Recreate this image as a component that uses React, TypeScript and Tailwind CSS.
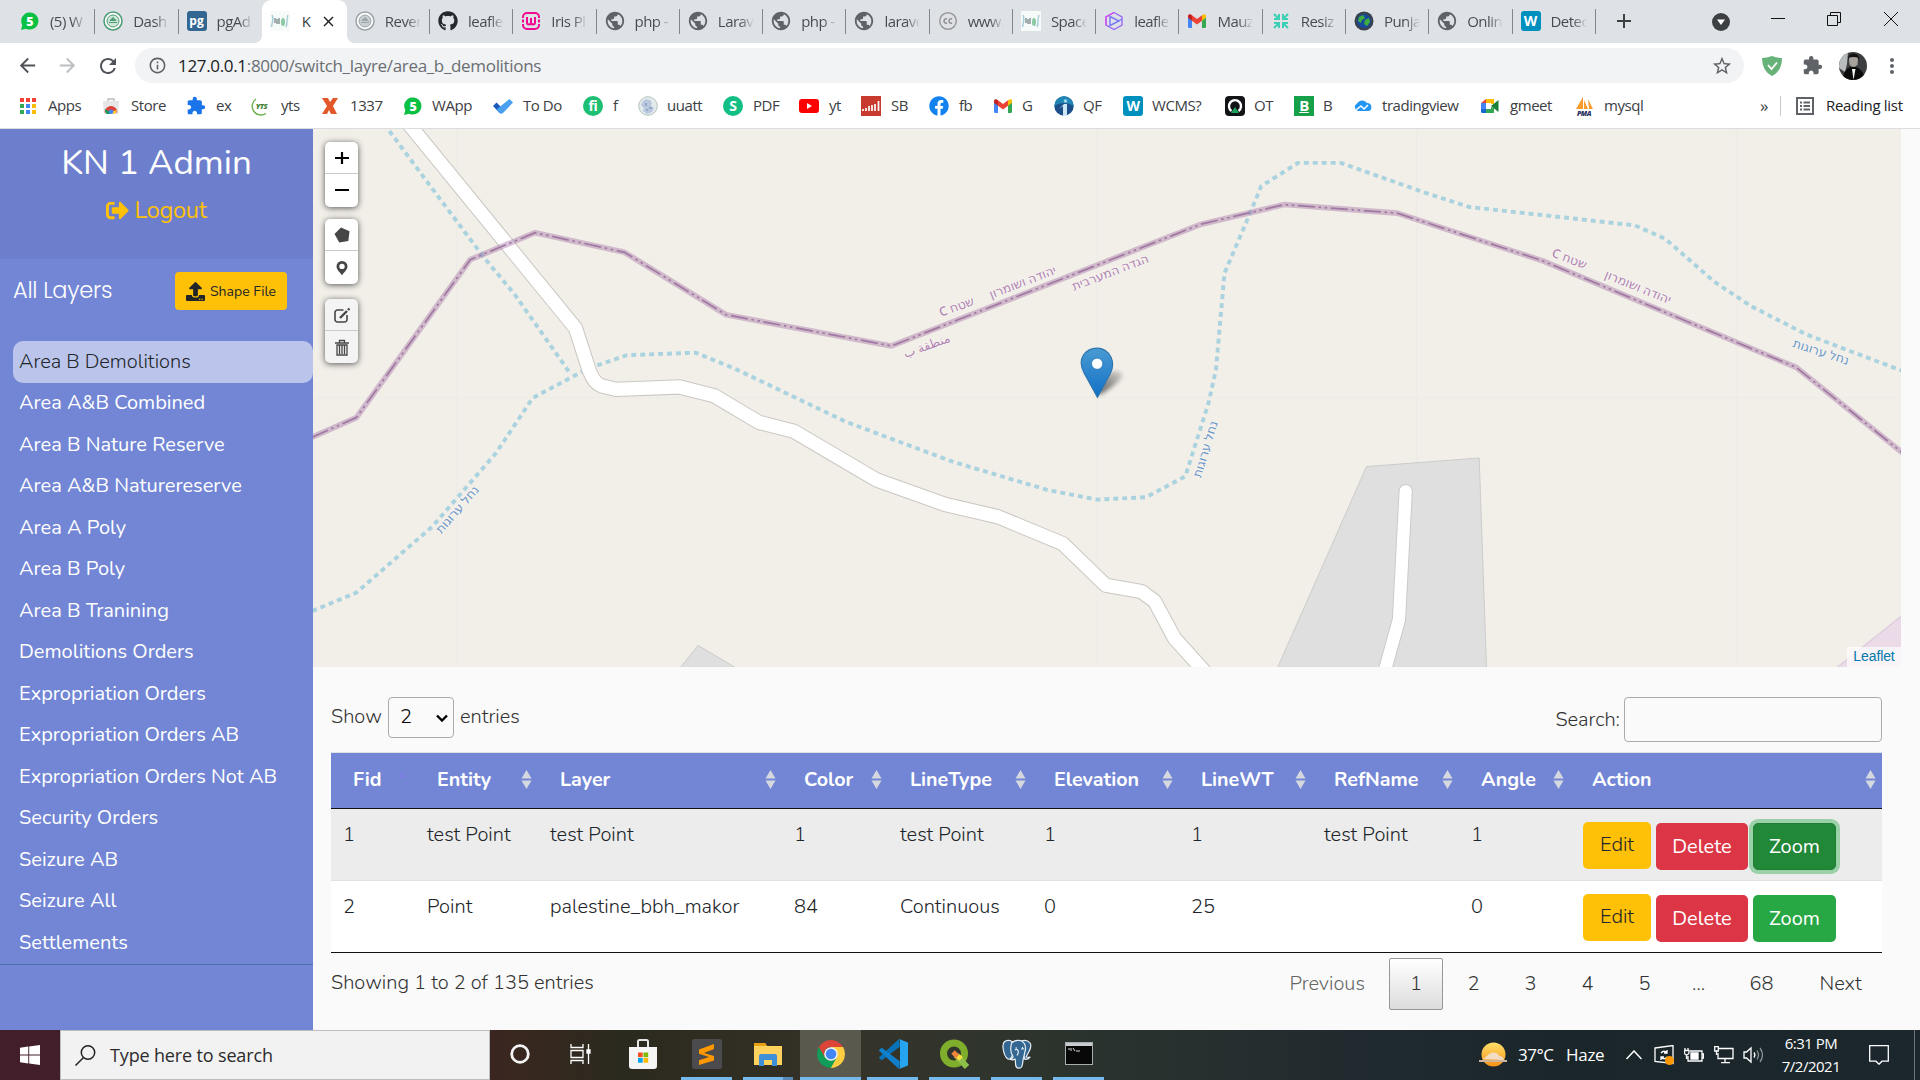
import React from "react";
import { FaSignOutAlt, FaUpload, FaGithub, FaFacebook } from "react-icons/fa";
import {
  MdArrowBack,
  MdArrowForward,
  MdRefresh,
  MdInfoOutline,
  MdStarBorder,
  MdExtension,
  MdMoreVert,
  MdPublic,
  MdClose,
  MdAdd,
} from "react-icons/md";

/* ---------- small brand marks ---------- */

const Badge = ({ cls, children }: { cls: string; children: React.ReactNode }) => (
  <span className={`flex h-5 w-5 shrink-0 items-center justify-center font-bold leading-none text-white ${cls}`}>{children}</span>
);

const WhatsNumber = () => (
  <svg viewBox="0 0 20 20" className="h-5 w-5 shrink-0">
    <path d="M1 19l1.3-4.8A8.6 8.6 0 1 1 6 17.7z" fill="#0ac144" />
    <text x="10" y="14.5" textAnchor="middle" fontSize="12.5" fontWeight="800" fill="#fff" fontFamily="Open Sans, sans-serif">5</text>
  </svg>
);

const Globe = () => <MdPublic className="h-[22px] w-[22px] shrink-0 text-[#5f6368]" />;

const Gmail = () => (
  <svg viewBox="0 0 20 20" className="h-5 w-5 shrink-0">
    <path d="M1 5.5v10.3c0 .7.5 1.2 1.2 1.2H5V8.5z" fill="#4285f4" />
    <path d="M15 8.5V17h2.8c.7 0 1.2-.5 1.2-1.2V5.5z" fill="#34a853" />
    <path d="M5 4.2v5.5l5 3.8 5-3.8V4.2L10 8z" fill="#ea4335" />
    <path d="M1 5v1.7l4 3V4.2C3.3 2.7 1 3.2 1 5z" fill="#c5221f" />
    <path d="M19 5v1.7l-4 3V4.2c1.700-1.500 4-1 4 .8z" fill="#fbbc04" />
  </svg>
);

const Seal = ({ ring, fill }: { ring: string; fill: string }) => (
  <svg viewBox="0 0 20 20" className="h-5 w-5 shrink-0">
    <circle cx="10" cy="10" r="9" fill="#fff" stroke={ring} strokeWidth="1.500" />
    <circle cx="10" cy="10" r="6" fill={fill} stroke={ring} strokeWidth="1" />
    <path d="M6 11.500h8M7 9.500l3-3 3 3z" stroke={ring} fill={ring} strokeWidth="1" />
  </svg>
);

const Emblem = () => (
  <svg viewBox="0 0 20 20" className="h-5 w-5 shrink-0">
    <circle cx="10" cy="10" r="9.300" fill="#e4eaec" stroke="#b3c3bd" strokeWidth="1" />
    <path d="M5 5l3-2 4 1 2 3-1 3 3 2-2 4-5 2-4-3 1-3-3-3z" fill="#b9c8de" />
    <path d="M7 7h2v3H7zM11 11h3v2h-3zM8 13h2v2H8z" fill="#93a9cb" />
  </svg>
);

const Wave = () => (
  <svg viewBox="0 0 20 20" className="h-5 w-5 shrink-0">
    <rect width="20" height="20" fill="#f6faf9" />
    <path d="M2 4c2 4 0 8-.5 12M18 4c-2 4 0 8-2 12" stroke="#a9cdd8" strokeWidth="1.500" fill="none" />
    <path d="M5 7v5M7 8v5M9 7v6" stroke="#6d7a7c" strokeWidth="1.200" />
    <ellipse cx="13" cy="11" rx="2" ry="4" fill="#8cc9a4" />
  </svg>
);

const Wamp = () => (
  <svg viewBox="0 0 20 20" className="h-5 w-5 shrink-0">
    <path d="M2 7V6a4 4 0 0 1 4-4h8a4 4 0 0 1 4 4v1M2 13v1a4 4 0 0 0 4 4h8a4 4 0 0 0 4-4v-1M2 8.500v3M18 8.500v3" stroke="#f10a90" strokeWidth="2" fill="none" />
    <path d="M6 6v5.500a2 2 0 0 0 4 0V7v4.500a2 2 0 0 0 4 0V6" stroke="#f10a90" strokeWidth="2" fill="none" />
  </svg>
);

const Creative = () => (
  <svg viewBox="0 0 20 20" className="h-5 w-5 shrink-0">
    <circle cx="10" cy="10" r="8.300" fill="none" stroke="#9a9a9a" strokeWidth="1.500" />
    <path d="M9 8a2 2.300 0 1 0 0 4M14 8a2 2.300 0 1 0 0 4" stroke="#8d8d8d" strokeWidth="1.500" fill="none" />
  </svg>
);

const Hex = () => (
  <svg viewBox="0 0 20 20" className="h-5 w-5 shrink-0" fill="none" strokeWidth="1.400">
    <path d="M10 1.500l8 4.500v8l-8 4.500-8-4.500V6z" stroke="#9a6bf6" />
    <path d="M10 1.500L2 6v8" stroke="#d84df0" />
    <path d="M6 5.500v9l9-4.500z M6 14.500L18 8" stroke="#7a78f8" />
  </svg>
);

const Shrink = () => (
  <svg viewBox="0 0 20 20" className="h-5 w-5 shrink-0" stroke="#3ccfb4" strokeWidth="2" fill="none">
    <path d="M8 3v5H3M3 3l5 5M12 3v5h5M17 3l-5 5M8 17v-5H3M3 17l5-5M12 17v-5h5M17 17l-5-5" />
  </svg>
);

const Earth = () => (
  <svg viewBox="0 0 20 20" className="h-5 w-5 shrink-0">
    <circle cx="10" cy="10" r="9.500" fill="#39424d" />
    <circle cx="10" cy="10" r="7" fill="#174a9c" />
    <path d="M5 6l4-2 2 3-3 2-1 3-3-2zM11 9l4-2 1 4-3 4-3-2z" fill="#3fae3c" />
  </svg>
);

const AppsGrid = () => (
  <span className="grid w-4 shrink-0 grid-cols-3 gap-[2px]">
    {["bg-[#f44336]", "bg-[#f44336]", "bg-[#f44336]", "bg-[#34a853]", "bg-[#4285f4]", "bg-[#fbbc04]", "bg-[#34a853]", "bg-[#4285f4]", "bg-[#fbbc04]"].map((c, i) => (
      <span key={i} className={`h-1 w-1 ${c}`} />
    ))}
  </span>
);

const ChromeLogo = ({ cls }: { cls: string }) => (
  <svg viewBox="0 0 28 28" className={cls}>
    <path d="M14 14l-12.100-7A14 14 0 0 0 14 28l6-10.500z" fill="#0f9d58" />
    <path d="M14 14L14 28A14 14 0 0 0 26.100 7H14z" fill="#ffcd40" />
    <path d="M14 28L20 17.500 14 14 8 17.500z" fill="#0f9d58" />
    <path d="M14 28l6.060-10.500L24 14l-5 12z" fill="#ffcd40" />
    <path d="M1.900 7A14 14 0 0 1 26.100 7H14a7 7 0 0 0-6.500 4.500L7.900 17.500z" fill="#db4437" />
    <circle cx="14" cy="14" r="6.800" fill="#f1f1f1" />
    <circle cx="14" cy="14" r="5.300" fill="#4285f4" />
  </svg>
);

const Store = () => (
  <svg viewBox="0 0 20 20" className="h-5 w-5 shrink-0">
    <path d="M7 5V3h6v2" stroke="#bbb" strokeWidth="1.300" fill="none" />
    <path d="M2 5h16l-.8 13H2.800z" fill="#e6e6e6" />
    <path d="M3.500 16.500a6.500 6.500 0 0 1 13 0h-4a2.500 2.500 0 0 0-5 0z" fill="#db4437" />
    <path d="M3.500 13l2 5h4l-2-3z" fill="#0f9d58" />
    <path d="M16.500 14l-2.500 4h-4l2.500-3z" fill="#ffcd40" />
    <circle cx="10" cy="15.800" r="2.300" fill="#4285f4" />
  </svg>
);

const Yts = () => (
  <svg viewBox="0 0 20 20" className="h-5 w-5 shrink-0">
    <path d="M5 3a8.500 8.500 0 0 0 10 14.500" stroke="#6ab04a" strokeWidth="1.400" fill="none" />
    <text x="10.500" y="12.500" textAnchor="middle" fontSize="7.500" fontWeight="800" fontStyle="italic" fill="#3f7f34" fontFamily="Open Sans, sans-serif">YTS</text>
  </svg>
);

const Cross1337 = () => (
  <svg viewBox="0 0 20 20" className="h-5 w-5 shrink-0">
    <path d="M2 2h6l2 4 3-4h5l-5 8 4 8h-6l-2-4-2 4H2l5-8z" fill="#e2582a" />
  </svg>
);

const Todo = () => (
  <svg viewBox="0 0 22 20" className="h-5 w-[22px] shrink-0">
    <path d="M1 10l3.500-3.500L11 13l-3.500 4z" fill="#185abd" />
    <path d="M7.500 17l-3-3.500L17.500 3 21 6.500 11 17q-1.700 1.400-3.500 0z" fill="#4aa0ee" />
  </svg>
);

const Youtube = () => (
  <svg viewBox="0 0 20 20" className="h-5 w-5 shrink-0">
    <rect y="3" width="20" height="14" rx="3" fill="#f00" />
    <path d="M8 7v6l5-3z" fill="#fff" />
  </svg>
);

const Bars = () => (
  <svg viewBox="0 0 20 20" className="h-5 w-5 shrink-0">
    <rect width="20" height="20" fill="#c93a2e" />
    <path d="M2 15v-2M5 15v-3M8 15v-5M11 15v-6M14 15V8M17.500 15V5" stroke="#fff" strokeWidth="1.700" />
  </svg>
);

const Quick = () => (
  <svg viewBox="0 0 20 20" className="h-5 w-5 shrink-0">
    <circle cx="10" cy="10" r="9.700" fill="#1c4f8a" />
    <path d="M.3 10a9.700 9.700 0 0 1 19.400 0q-10-6-19.400 0z" fill="#1f86b5" />
    <path d="M9 20V10l-4 3 5-5h3v12z" fill="#cfe6f7" />
    <circle cx="11.500" cy="5" r="1.800" fill="#9bd7ea" />
  </svg>
);

const Dial = () => (
  <svg viewBox="0 0 20 20" className="h-5 w-5 shrink-0">
    <rect width="20" height="20" rx="4" fill="#131417" />
    <path d="M6.500 15a6 6 0 1 1 7 0" stroke="#fff" strokeWidth="2.400" fill="none" />
    <path d="M10 11l4 6H6z" fill="#18a45b" />
  </svg>
);

const Cloud = () => (
  <svg viewBox="0 0 20 20" className="h-5 w-5 shrink-0">
    <path d="M5 15a4 4 0 0 1-1-7.500A6 6 0 0 1 14 7a4.200 4.200 0 0 1 2 8z" fill="#2196f3" />
    <path d="M3 14l5-4 3 3 4-4" stroke="#fff" strokeWidth="1.500" fill="none" />
  </svg>
);

const Meet = () => (
  <svg viewBox="0 0 20 20" className="h-5 w-5 shrink-0">
    <path d="M1 7l5-4v4z" fill="#ea4335" />
    <path d="M6 3h8v5h-3V7H6z" fill="#fbbc04" />
    <path d="M1 7h5v6H1z" fill="#4285f4" />
    <path d="M1 13h5v4H2.500Q1 17 1 15.500z" fill="#1967d2" />
    <path d="M6 13h5v-2l3 1v5H6z" fill="#34a853" />
    <path d="M11 10l7.500-6v12z" fill="#188038" />
  </svg>
);

const Pma = () => (
  <svg viewBox="0 0 20 20" className="h-5 w-5 shrink-0">
    <path d="M2 13L9 1v12zM10 13V4l4 9zM14 3l5 10h-4z" fill="#f89c2e" />
    <text x="10" y="19.500" textAnchor="middle" fontSize="7" fontWeight="800" fontStyle="italic" fill="#2d3263" fontFamily="Open Sans, sans-serif">PMA</text>
  </svg>
);

const Elephant = () => (
  <svg viewBox="0 0 30 30" className="h-[30px] w-[30px]" fill="#336791" stroke="#e8eef3" strokeWidth="1.200" strokeLinejoin="round">
    <path d="M8 1.500C3 .5.500 3.500 1 8.500 1.500 13 3.500 18.500 6 20q2 .8 3.500-2L11 15V3z" />
    <path d="M19 2q6-2 9 2 2 3.500-1 8.500-1.500 3-3 5.500 2 .5 4 .2-1.500 2.300-5 2.300l-2-5z" />
    <path d="M9.500 4q3-3.500 9-2.500Q24 4 23.500 10L22 17q-1 3.500-1.500 8-.5 4.200-3.500 4.200-3.500 0-3.500-4.700l-.3-4.500q-2.700 1.500-5 .3 3-1 2.800-3Q8.500 14 8.700 9z" />
    <path d="M13 11q2-1.500 3 .5t-1 5M22 10q-2-1-2.500.5" fill="none" />
    <path d="M13.500 9h1.500M20 8.500h1" stroke="#fff" />
  </svg>
);

/* ---------- browser chrome ---------- */

const tabs: { label: string; icon: React.ReactNode; active?: boolean }[] = [
  { label: "(5) W", icon: <WhatsNumber /> },
  { label: "Dash", icon: <Seal ring="#4c9c74" fill="#cfe6d8" /> },
  { label: "pgAd", icon: <Badge cls="rounded-[3px] bg-[#336791] text-[12px]">pg</Badge> },
  { label: "K", icon: <Wave />, active: true },
  { label: "Rever", icon: <Seal ring="#9aa5a8" fill="#c9d0d3" /> },
  { label: "leafle", icon: <FaGithub className="h-5 w-5 shrink-0 text-[#24292e]" /> },
  { label: "Iris Pl", icon: <Wamp /> },
  { label: "php -", icon: <Globe /> },
  { label: "Larav", icon: <Globe /> },
  { label: "php -", icon: <Globe /> },
  { label: "larave", icon: <Globe /> },
  { label: "www.", icon: <Creative /> },
  { label: "Space", icon: <Wave /> },
  { label: "leafle", icon: <Hex /> },
  { label: "Mauz", icon: <Gmail /> },
  { label: "Resiz", icon: <Shrink /> },
  { label: "Punja", icon: <Earth /> },
  { label: "Onlin", icon: <Globe /> },
  { label: "Detec", icon: <Badge cls="rounded-[3px] bg-[#0090bd] text-[14px]">W</Badge> },
];

function TabStrip() {
  return (
    <div className="flex h-[43px] bg-[#dee1e6] pl-3">
      {tabs.map((t, i) =>
        t.active ? (
          <div key={i} className="relative flex w-[85px] shrink-0 items-center rounded-t-[9px] bg-white pb-[1px] pl-2 text-[15px] text-[#3c4043]">
            <span className="absolute -left-2 bottom-0 h-2 w-2 bg-[radial-gradient(circle_at_0_0,transparent_8px,white_8px)]" />
            <span className="absolute -right-2 bottom-0 h-2 w-2 bg-[radial-gradient(circle_at_100%_0,transparent_8px,white_8px)]" />
            {t.icon}
            <span className="ml-[12px] flex-1">{t.label}</span>
            <MdClose className="mr-[10px] h-[17px] w-[17px] text-[#202124]" />
          </div>
        ) : (
          <div key={i} className="flex w-[83.280px] shrink-0 items-center pb-[1px] pl-2">
            <span className="flex w-5 shrink-0 justify-center">{t.icon}</span>
            <span className="ml-[10px] w-[36px] bg-linear-to-r from-[#45494d] from-60% to-[#dee1e6] bg-clip-text text-[15px] tracking-[-0.55px] whitespace-nowrap text-transparent">
              {t.label}
            </span>
            <span className={`ml-auto h-[25px] w-px ${tabs[i + 1]?.active ? "bg-transparent" : "bg-[#84878b]"}`} />
          </div>
        ),
      )}
      <MdAdd className="mt-[9px] ml-[16px] h-6 w-6 text-[#3c4043]" />
      <div className="ml-auto flex items-start">
        <svg viewBox="0 0 18 18" className="mt-[13px] mr-[41px] h-[18px] w-[18px]">
          <circle cx="9" cy="9" r="9" fill="#3c4043" />
          <path d="M5 6.500h8L9 12z" fill="#fff" />
        </svg>
        <svg viewBox="0 0 14 14" className="mt-3 mr-[42px] h-[14px] w-[14px]" stroke="#111" fill="none"><path d="M0 6.500h14" /></svg>
        <svg viewBox="0 0 14 14" className="mt-3 mr-[43px] h-[14px] w-[14px]" stroke="#111" fill="none"><path d="M.5 3.500h10v10H.5zM3.500 3.500V.5h10v10h-3" /></svg>
        <svg viewBox="0 0 14 14" className="mt-3 mr-[22px] h-[14px] w-[14px]" stroke="#111" fill="none"><path d="M0 0l14 14M14 0L0 14" /></svg>
      </div>
    </div>
  );
}

function AddressBar() {
  return (
    <div className="flex h-[45px] items-center bg-white">
      <MdArrowBack className="ml-[16px] h-[23px] w-[23px] text-[#505459]" />
      <MdArrowForward className="ml-[17px] h-[23px] w-[23px] text-[#bcbec1]" />
      <MdRefresh className="ml-[17px] h-6 w-6 text-[#505459]" />
      <div className="ml-[15px] flex h-[35px] w-[1609px] items-center rounded-full bg-[#f1f3f4] pl-[13px] text-[17px] tracking-[-0.33px] text-[#6a6e73]">
        <MdInfoOutline className="mr-[11px] h-[19px] w-[19px] text-[#5f6368]" />
        <span><span className="text-[#202124]">127.0.0.1</span>:8000/switch_layre/area_b_demolitions</span>
        <MdStarBorder className="mr-[11px] ml-auto h-[22px] w-[22px] text-[#5f6368]" />
      </div>
      <svg viewBox="0 0 20 20" className="ml-[18px] h-5 w-5">
        <path d="M10 0q5 2 10 2 0 13-10 18Q0 15 0 2q5 0 10-2z" fill="#67b279" />
        <path d="M6 9l3.500 4L15 6.500" stroke="#fff" strokeWidth="1.800" fill="none" />
      </svg>
      <MdExtension className="ml-[20px] h-[21px] w-[21px] text-[#5f6368]" />
      <svg viewBox="0 0 28 28" className="ml-[16px] h-7 w-7">
        <clipPath id="avatar"><circle cx="14" cy="14" r="14" /></clipPath>
        <g clipPath="url(#avatar)">
          <rect width="28" height="28" fill="#3c3e40" />
          <path d="M0 0h9l-1 12-2 8-6-4z" fill="#b9bcbd" />
          <path d="M4 28q0-10 7-13h6q8 3 9 13z" fill="#0b0b0c" />
          <path d="M10 7q0-4 4.500-4T19 7l-.5 5.500q-4 5-8 0z" fill="#a7a19c" />
          <path d="M9 8q0-7 6-6.500 6 .5 5 7l-1.500-3q-4-1-8 0z" fill="#141414" />
          <path d="M13 17l1.500 11 2-11z" fill="#f4f4f4" />
        </g>
      </svg>
      <MdMoreVert className="ml-[13px] h-6 w-6 text-[#5f6368]" />
    </div>
  );
}

const bookmarks: { label: string; icon: React.ReactNode; w: string; gap: string }[] = [
  { label: "Apps", icon: <AppsGrid />, w: "w-[81px]", gap: "gap-3" },
  { label: "Store", icon: <Store />, w: "w-[85px]", gap: "gap-[10px]" },
  { label: "ex", icon: <MdExtension className="h-5 w-5 shrink-0 text-[#1a73e8]" />, w: "w-[65px]", gap: "gap-[10px]" },
  { label: "yts", icon: <Yts />, w: "w-[69px]", gap: "gap-[10px]" },
  { label: "1337", icon: <Cross1337 />, w: "w-[83px]", gap: "gap-[10px]" },
  { label: "WApp", icon: <WhatsNumber />, w: "w-[89px]", gap: "gap-[9px]" },
  { label: "To Do", icon: <Todo />, w: "w-[91px]", gap: "gap-[9px]" },
  { label: "f", icon: <Badge cls="rounded-full bg-[#1dbf73] text-[14px]">fi</Badge>, w: "w-[55px]", gap: "gap-[10px]" },
  { label: "uuatt", icon: <Emblem />, w: "w-[85px]", gap: "gap-[9px]" },
  { label: "PDF", icon: <Badge cls="rounded-full bg-[#11bf85] text-[14px]">S</Badge>, w: "w-[76px]", gap: "gap-[10px]" },
  { label: "yt", icon: <Youtube />, w: "w-[62px]", gap: "gap-[10px]" },
  { label: "SB", icon: <Bars />, w: "w-[68px]", gap: "gap-[10px]" },
  { label: "fb", icon: <FaFacebook className="h-5 w-5 shrink-0 text-[#1382ee]" />, w: "w-[64px]", gap: "gap-[10px]" },
  { label: "G", icon: <Gmail />, w: "w-[61px]", gap: "gap-[9px]" },
  { label: "QF", icon: <Quick />, w: "w-[69px]", gap: "gap-[9px]" },
  { label: "WCMS?", icon: <Badge cls="rounded-[3px] bg-[#0090bd] text-[14px]">W</Badge>, w: "w-[102px]", gap: "gap-[9px]" },
  { label: "OT", icon: <Dial />, w: "w-[69px]", gap: "gap-[9px]" },
  { label: "B", icon: <Badge cls="bg-[#15a049] text-[15px] underline">B</Badge>, w: "w-[59px]", gap: "gap-[9px]" },
  { label: "tradingview", icon: <Cloud />, w: "w-[127px]", gap: "gap-[9px]" },
  { label: "gmeet", icon: <Meet />, w: "w-[94px]", gap: "gap-[10px]" },
  { label: "mysql", icon: <Pma />, w: "w-[90px]", gap: "gap-[10px]" },
];

function Bookmarks() {
  return (
    <div className="flex h-[41px] items-center border-b border-[#dadce0] bg-white pb-[5px] pl-[20px] text-[15px] tracking-[-0.45px] text-[#3c4043]">
      {bookmarks.map((b) => (
        <div key={b.label} className={`flex shrink-0 items-center whitespace-nowrap ${b.w} ${b.gap}`}>
          {b.icon}
          <span>{b.label}</span>
        </div>
      ))}
      <span className="ml-auto text-[17px]">»</span>
      <span className="ml-[12px] h-5 w-px bg-[#c4c7cb]" />
      <svg viewBox="0 0 18 18" className="mr-[12px] ml-[15px] h-[18px] w-[18px] shrink-0" fill="none" stroke="#5f6368" strokeWidth="2">
        <path d="M1 1h16v16H1zM4 5.500h2M7.500 5.500H14M4 9h2M7.500 9H14M4 12.500h2M7.500 12.500H14" />
      </svg>
      <span className="mr-[17px] w-[77px] tracking-[-0.3px] whitespace-nowrap text-[#202124]">Reading list</span>
    </div>
  );
}

/* ---------- sidebar ---------- */

const layers = [
  "Area B Demolitions",
  "Area A&B Combined",
  "Area B Nature Reserve",
  "Area A&B Naturereserve",
  "Area A Poly",
  "Area B Poly",
  "Area B Tranining",
  "Demolitions Orders",
  "Expropriation Orders",
  "Expropriation Orders AB",
  "Expropriation Orders Not AB",
  "Security Orders",
  "Seizure AB",
  "Seizure All",
  "Settlements",
];

function Sidebar() {
  return (
    <aside className="flex w-[313px] shrink-0 flex-col bg-[#7286d5] text-white">
      <div className="flex h-[130px] flex-col items-center bg-[#6d7fcc] pt-[12px]">
        <h3 className="text-[35px] leading-[44px]">KN 1 Admin</h3>
        <a className="mt-[8px] flex items-center gap-[5px] text-[23.500px] leading-[34px] tracking-[-0.3px] text-[#ffc107]">
          <FaSignOutAlt className="h-[23px] w-[23px]" />
          Logout
        </a>
      </div>
      <div className="flex h-[64px] items-center justify-between pr-[26px] pl-[13px]">
        <span className="font-['Poppins','Inter',sans-serif] text-[22.500px] font-light tracking-[-0.25px]">All Layers</span>
        <button className="flex h-[38px] w-[112px] items-center rounded-[4px] bg-[#ffc107] pl-[11px] text-[14px] text-[#212529]">
          <FaUpload className="mr-[5px] h-[19px] w-[19px]" />
          Shape File
        </button>
      </div>
      <ul className="mt-[18px] border-b border-[#4d73a0] pl-[13px]">
        {layers.map((l, i) => (
          <li
            key={l}
            className={`flex h-[41.500px] items-center rounded-[10px] pl-[6px] text-[20px] whitespace-nowrap ${i === 0 ? "bg-[#bbc5eb] font-light text-[#212529]" : ""}`}
          >
            {l}
          </li>
        ))}
      </ul>
    </aside>
  );
}

/* ---------- map ---------- */

const stream =
  "M255 499L291 484 353 430 405 370 435 325 480 301 512 290 568 288 600 301 690 344 719 355 778 377 855 400 896 408 936 406 968 389 987 329 993 302 1000 223 1018 181 1030 152 1060 133 1095 133 1163 157 1200 169 1335 184 1360 195 1400 230 1430 250 1475 273 1554 303";
const border = "M255 357L291 341 384 212 437 190 510 206 593 257 728 282.500 981 183 1049 167 1141 174 1260 213 1467 300 1554 370";
const road = "M332 99L470 268 481 302Q485 313 491 315L503 318 555 316 583 323 620 345 648 352 716 392 772 412 815 422 868 444 903 478 932 483 943 491 959 521 986 551";

const labels: { t: string; x: number; y: number; r: number; blue?: boolean }[] = [
  { t: "שטח C", x: 781.5, y: 251, r: -20 },
  { t: "יהודה ושומרון", x: 835.5, y: 231, r: -21 },
  { t: "הגדה המערבית", x: 907, y: 223, r: -21 },
  { t: "منطقة ب", x: 757, y: 283, r: -20 },
  { t: "שטח C", x: 1281.5, y: 212, r: 21 },
  { t: "יהודה ושומרון", x: 1337.5, y: 235, r: 22 },
  { t: "נחל ערוגות", x: 1487, y: 288, r: 18, blue: true },
  { t: "נחל ערוגות", x: 985, y: 367, r: -73, blue: true },
  { t: "נחל ערוגות", x: 374, y: 416.5, r: -49, blue: true },
];

function ToolGroup({ children, cls }: { children: React.ReactNode; cls: string }) {
  return <div className={`flex w-[33px] flex-col divide-y divide-[#ccc] overflow-hidden rounded-[5px] shadow-[0_1px_6px_rgba(0,0,0,0.65)] ${cls}`}>{children}</div>;
}

function MapView() {
  return (
    <div className="relative h-[538px] w-[1588px] overflow-hidden bg-[#f2efe9]">
      <svg viewBox="255.600 105.300 1296.900 439.400" preserveAspectRatio="none" className="h-full w-full" fill="none">
        <defs>
          <linearGradient id="pin" x1="0" y1="0" x2="0" y2="1">
            <stop offset="0" stopColor="#4a9bd2" />
            <stop offset="1" stopColor="#126fc6" />
          </linearGradient>
          <linearGradient id="shade" x1="0" y1="1" x2="1" y2="0">
            <stop offset="0" stopColor="#000" stopOpacity=".65" />
            <stop offset="1" stopColor="#000" stopOpacity=".1" />
          </linearGradient>
          <filter id="soft" x="-50%" y="-50%" width="200%" height="200%"><feGaussianBlur stdDeviation="1.600" /></filter>
        </defs>
        <path d="M373 105V545M895.700 105V545M1157 105V545M1418 105V545M255 324.800H1553" stroke="#edebe6" strokeWidth=".8" />
        <path d="M1116 381L1208 374 1214 546H1043zM555 546L570 527 602 546z" fill="#dfdfdf" stroke="#cbcbcb" strokeWidth=".8" />
        <path d="M1499 546L1508 539 1554 502V546z" fill="#ebdbe8" stroke="#dccadb" />
        <path d={stream} stroke="#aad3df" strokeWidth="3.200" strokeDasharray="4 3.300" />
        <path d="M318 107L350 150 395 210 420 240 465 304" stroke="#aad3df" strokeWidth="3.200" strokeDasharray="4 3.300" />
        <path d={road} stroke="#cbc8c3" strokeWidth="12.500" strokeLinejoin="round" />
        <path d={road} stroke="#fff" strokeWidth="10.800" strokeLinejoin="round" />
        <path d="M1148 401L1142.500 506 1130 551" stroke="#c9c9c9" strokeWidth="11.500" strokeLinecap="round" />
        <path d="M1148 401L1142.500 506 1130 551" stroke="#fff" strokeWidth="10" strokeLinecap="round" />
        <path d={border} stroke="#9d6a9d" strokeOpacity=".4" strokeWidth="4.600" strokeLinejoin="round" />
        <path d={border} stroke="#a078a2" strokeWidth="1.400" strokeDasharray="14 3 2 3 2 3" />
        {labels.map((l, i) => (
          <text
            key={i}
            transform={`translate(${l.x} ${l.y}) rotate(${l.r})`}
            textAnchor="middle"
            dominantBaseline="middle"
            fontSize="10.200"
            fontWeight="500"
            direction="rtl"
            fontFamily="Noto Sans, DejaVu Sans, sans-serif"
            fill={l.blue ? "#6d99c9" : "#b184b3"}
            stroke="#f6f3ef"
            strokeWidth="1.500"
            paintOrder="stroke"
          >
            {l.t}
          </text>
        ))}
        <path d="M897 323Q899 311 907 304 914 301 917 306 915 313 897 323z" fill="url(#shade)" filter="url(#soft)" />
        <path d="M896.300 324.500L885.300 304.500Q880.800 296 884.800 290 888.800 284.300 895.800 284.300 903.300 284.300 907.300 291.500 910.300 298 906.800 305z" fill="url(#pin)" stroke="#2c74ae" strokeWidth=".9" />
        <circle cx="896" cy="297" r="4.600" fill="#fff" stroke="#2c7bbd" strokeWidth=".7" />
      </svg>

      <div className="absolute top-[13px] left-[12px] flex flex-col">
        <ToolGroup cls="bg-white">
          <span className="flex h-[32px] items-center justify-center"><svg viewBox="0 0 14 14" className="h-[14px] w-[14px]" stroke="#000" strokeWidth="2.200"><path d="M0 7h14M7 1v12" /></svg></span>
          <span className="flex h-[33px] items-center justify-center pb-[2px]"><svg viewBox="0 0 14 14" className="h-[14px] w-[14px]" stroke="#000" strokeWidth="2.200"><path d="M0 7h14" /></svg></span>
        </ToolGroup>
        <ToolGroup cls="mt-[12px] bg-white">
          <span className="flex h-[32px] items-center justify-center"><svg viewBox="0 0 16 16" className="h-4 w-4"><path d="M7 .5l8.500 3.800-1.200 9.700-9 1.500L.500 7z" fill="#464646" /></svg></span>
          <span className="flex h-[33px] items-center justify-center"><svg viewBox="0 0 16 16" className="h-4 w-4"><path fillRule="evenodd" d="M8 1a5.500 5.500 0 0 1 5.500 5.500C13.500 10 9 13 8 15.500 7 13 2.500 10 2.500 6.500A5.500 5.500 0 0 1 8 1zm0 2.700a2.700 2.700 0 1 0 0 5.400 2.700 2.700 0 0 0 0-5.400z" fill="#464646" /></svg></span>
        </ToolGroup>
        <ToolGroup cls="mt-[15px] bg-[#f4f4f4]">
          <span className="flex h-[32px] items-center justify-center">
            <svg viewBox="0 0 16 16" className="h-4 w-4" fill="none" stroke="#464646" strokeWidth="1.600">
              <path d="M9.500 3H3.500A2.500 2.500 0 0 0 1 5.500v7A2.500 2.500 0 0 0 3.500 15h7a2.500 2.500 0 0 0 2.500-2.500V8" />
              <path d="M6 11L13 4" strokeWidth="2.400" /><path d="M14 3l1.500-1.500" strokeWidth="2.400" />
            </svg>
          </span>
          <span className="flex h-[32px] items-center justify-center">
            <svg viewBox="0 0 16 17" className="h-[17px] w-4" fill="none" stroke="#464646" strokeWidth="1.300">
              <path d="M1 4h14M5.500 4V1.500h5V4M3 6v10h10V6zM5.500 6.500V15M8 6.500V15M10.500 6.500V15" />
            </svg>
          </span>
        </ToolGroup>
      </div>

      <div className="absolute right-0 bottom-0 flex h-[20px] w-[54px] items-center justify-center bg-white/70 pb-[2px] font-['Liberation_Sans',sans-serif] text-[14px] tracking-[-0.1px] text-[#0078a8]">
        Leaflet
      </div>
    </div>
  );
}

/* ---------- data table ---------- */

const columns = [
  { name: "Fid", w: "w-[84px]" },
  { name: "Entity", w: "w-[123px]" },
  { name: "Layer", w: "w-[244px]" },
  { name: "Color", w: "w-[106px]" },
  { name: "LineType", w: "w-[144px]" },
  { name: "Elevation", w: "w-[147px]" },
  { name: "LineWT", w: "w-[133px]" },
  { name: "RefName", w: "w-[147px]" },
  { name: "Angle", w: "w-[111px]" },
  { name: "Action", w: "w-[312px]" },
];

const rows = [
  ["1", "test Point", "test Point", "1", "test Point", "1", "1", "test Point", "1"],
  ["2", "Point", "palestine_bbh_makor", "84", "Continuous", "0", "25", "", "0"],
];

const SortIcon = ({ first }: { first: boolean }) =>
  first ? (
    <svg viewBox="0 0 11 19" className="mr-[7px] ml-auto h-[19px] w-[11px]"><path d="M5.500 2l3.500 6H2z" fill="#7a7fe0" /></svg>
  ) : (
    <svg viewBox="0 0 11 19" className="mr-[6px] ml-auto h-[19px] w-[11px]"><path d="M5.500 0L10.500 8.500H.5zM5.500 19L.5 10.500h10z" fill="#d6d8df" /></svg>
  );

function DataTable() {
  return (
    <div className="w-[1569px] pt-[30px] pl-[18px] text-[20px] font-light text-[#333]">
      <div className="flex h-[55px] items-start">
        <div className="flex h-[41px] items-center">
          <span className="w-[57px] pb-px">Show</span>
          <div className="flex h-[41px] w-[66px] items-center justify-between rounded-[4px] border border-[#aaa] pr-[5px] pl-[11px] text-black">
            <span className="pb-px">2</span>
            <svg viewBox="0 0 12 8" className="h-2 w-3" fill="none" stroke="#000" strokeWidth="2.400"><path d="M1 1.500l5 5 5-5" /></svg>
          </div>
          <span className="ml-[6px] pb-px">entries</span>
        </div>
        <div className="ml-auto flex h-[45px] items-center">
          <span className="mr-[4px]">Search:</span>
          <div className="h-[45px] w-[258px] rounded-[4px] border border-[#aaa]" />
        </div>
      </div>

      <div className="flex h-[57px] items-center border-t border-b border-t-[#dee2e6] border-b-[#111] bg-[#7286d5] pb-[2px] text-[19.700px] font-bold text-white">
        {columns.map((c, i) => (
          <div key={c.name} className={`flex shrink-0 items-center pl-[22px] ${c.w}`}>
            {c.name}
            <SortIcon first={i === 0} />
          </div>
        ))}
      </div>

      {rows.map((r, i) => (
        <div
          key={i}
          className={`flex h-[72px] text-[#212529] ${i === 0 ? "border-b border-[#dee2e6] bg-[#ececec]" : "border-b border-[#111] bg-white"}`}
        >
          {r.map((v, j) => (
            <div key={j} className={`shrink-0 pt-[11px] pl-3 whitespace-nowrap ${columns[j].w}`}>
              {v}
            </div>
          ))}
          <div className="flex items-start gap-[5px] pt-[13px] pl-[13px]">
            <button className="h-[47px] w-[68px] rounded-[5px] bg-[#ffc107] pb-[2px]">Edit</button>
            <button className="mt-px h-[47px] w-[92px] rounded-[5px] bg-[#dc3545] font-normal text-white">Delete</button>
            <button
              className={`mt-px h-[47px] w-[83px] rounded-[5px] font-normal text-white ${i === 0 ? "border border-[#1e7e34] bg-[#218838] shadow-[0_0_0_4px_#9bd1a9]" : "bg-[#28a745]"}`}
            >
              Zoom
            </button>
          </div>
        </div>
      ))}

      <div className="flex h-[77px] justify-between">
        <span className="pt-[15px]">Showing 1 to 2 of 135 entries</span>
        <div className="mt-[5px] flex h-[52px] items-center">
          <span className="mr-[24px] text-[#666]">Previous</span>
          <span className="mr-[2px] flex h-[52px] w-[54px] items-center justify-center rounded-[2px] border border-[#979797] bg-linear-to-b from-white to-[#dcdcdc]">1</span>
          <span className="w-[57px] text-center">2</span>
          <span className="w-[57px] text-center">3</span>
          <span className="w-[57px] text-center">4</span>
          <span className="w-[57px] text-center">5</span>
          <span className="w-[51px] text-center">…</span>
          <span className="w-[75px] text-center">68</span>
          <span className="w-[83px] text-center">Next</span>
        </div>
      </div>
    </div>
  );
}

/* ---------- taskbar ---------- */

const Task = ({ cls, bar, children }: { cls: string; bar?: string; children: React.ReactNode }) => (
  <div className={`flex h-[50px] shrink-0 flex-col items-center ${cls}`}>
    <div className="flex h-[47px] items-center">{children}</div>
    {bar && <div className={`h-[3px] ${bar}`} />}
  </div>
);

function Taskbar() {
  return (
    <div className="flex h-[50px] bg-[linear-gradient(90deg,#421e2a_0,#3d2222_440px,#38271f_520px,#2b2a1f_620px,#2f2c21_700px,#35332a_860px,#2f352d_1000px,#27312e_1150px,#212b2f_1350px,#1b262b_1550px,#1b272c_1920px)] text-white">
      <div className="flex w-[60px] shrink-0 items-center justify-center">
        <svg viewBox="0 0 20 20" className="h-5 w-5" fill="#fff"><path d="M0 2.800L8.300 1.600v8H0zM9.200 1.500L20 0v9.600H9.200zM0 10.400h8.300v8L0 17.200zM9.200 10.400H20V20L9.200 18.500z" /></svg>
      </div>
      <div className="flex w-[430px] shrink-0 items-center border border-[#bdbdbd] bg-[#f2f2f2] pl-[14px] text-[18px] tracking-[-0.15px] text-[#2b2b2b]">
        <svg viewBox="0 0 21 21" className="mr-[14px] h-[21px] w-[21px]" fill="none" stroke="#222" strokeWidth="1.500"><circle cx="13" cy="7.500" r="6.700" /><path d="M8.500 12.500L.5 20.500" /></svg>
        Type here to search
      </div>
      <Task cls="w-[60px]"><svg viewBox="0 0 20 20" className="h-5 w-5"><circle cx="10" cy="10" r="8.300" fill="none" stroke="#f4f4f4" strokeWidth="2.800" /></svg></Task>
      <Task cls="w-[60px]">
        <svg viewBox="0 0 21 20" className="h-5 w-[21px]" fill="none" stroke="#fff" strokeWidth="1.300"><path d="M1 0v3.500h12V0M1 20v-3.500h12V20M1 6.500h12v7H1zM18.500 0v20" /><path d="M17 6h3v3h-3z" fill="#fff" /></svg>
      </Task>
      <Task cls="ml-[2px] w-[62px]">
        <svg viewBox="0 0 30 30" className="h-[30px] w-[30px]">
          <path d="M10 8V2.500Q10 1 11.500 1h7Q20 1 20 2.500V8" fill="none" stroke="#e6e6e6" strokeWidth="2" />
          <path d="M1 8h28v19q0 3-3 3H4q-3 0-3-3z" fill="#f5f5f5" />
          <path d="M10 13.500h4.700v4.700H10z" fill="#f25022" /><path d="M15.500 13.500h4.700v4.700h-4.700z" fill="#7fba00" />
          <path d="M10 19h4.700v4.700H10z" fill="#00a4ef" /><path d="M15.500 19h4.700v4.700h-4.700z" fill="#ffb900" />
        </svg>
      </Task>
      <Task cls="ml-[7px] w-[51px]" bar="w-[51px] bg-[#76b9ed]">
        <svg viewBox="0 0 30 30" className="h-[30px] w-[30px]"><rect width="30" height="30" rx="2" fill="#4b4b4d" /><path d="M7 10.500L22 5v5l-10 4 10 3v4.500L7 26v-4.700L17 18 7 14.800z" fill="#ff9800" /></svg>
      </Task>
      <Task cls="ml-[11px] w-[50px]" bar="w-[50px] border-r-[10px] border-[#5a88b4] bg-[#76b9ed]">
        <svg viewBox="0 0 28 24" className="h-6 w-7"><path d="M0 1h11l2 3h15v19H0z" fill="#ffd25e" /><path d="M0 1h11l2 3H0z" fill="#e8a013" /><path d="M5 24V14q0-2 2-2h14q2 0 2 2v10h-5v-6h-8v6z" fill="#3d8fd8" /></svg>
      </Task>
      <Task cls="ml-[7px] w-[61px] bg-[#5a594d]" bar="w-[61px] bg-[#76b9ed]"><ChromeLogo cls="h-7 w-7" /></Task>
      <Task cls="ml-[6px] w-[51px]" bar="w-[51px] bg-[#76b9ed]">
        <svg viewBox="0 0 30 30" className="h-[30px] w-[30px]"><path d="M21 0l1 7.500L3.500 21.500.8 18.500z" fill="#0a72b8" /><path d="M21 30L.8 11.500 3.500 8.500 22 22.500z" fill="#1080cc" /><path d="M21 0l9 3.500v23L21 30q1-1 1-3V3q0-2-1-3z" fill="#27a4ef" /></svg>
      </Task>
      <Task cls="ml-[11px] w-[51px]" bar="w-[51px] bg-[#76b9ed]">
        <svg viewBox="0 0 30 30" className="h-[30px] w-[30px]" fill="none">
          <circle cx="14" cy="14.500" r="10.500" stroke="#7fae2c" strokeWidth="7" />
          <path d="M16 16l11 12" stroke="#8dc04a" strokeWidth="6" /><path d="M13 13l6 6" stroke="#f0843c" strokeWidth="5" /><path d="M18 17l3 3" stroke="#f7e03c" strokeWidth="5" />
        </svg>
      </Task>
      <Task cls="ml-[11px] w-[51px]" bar="w-[51px] bg-[#76b9ed]"><Elephant /></Task>
      <Task cls="ml-[11px] w-[51px]" bar="w-[51px] bg-[#76b9ed]">
        <svg viewBox="0 0 28 23" className="h-[23px] w-7"><rect x=".5" y=".5" width="27" height="22" fill="#080808" stroke="#a9adb0" /><path d="M1 1h26v3H1z" fill="#c9ccce" /><path d="M3 7h2M6 6v3M8 6l2 3M11 9h4" stroke="#ddd" /></svg>
      </Task>

      <div className="ml-auto flex shrink-0 items-center text-[17px] whitespace-nowrap">
        <svg viewBox="0 0 28 26" className="mr-[11px] h-[26px] w-7"><defs><linearGradient id="sun" x1="0" y1="0" x2="0" y2="1"><stop offset="0" stopColor="#ffe06a" /><stop offset="1" stopColor="#f79216" /></linearGradient></defs><circle cx="14.500" cy="12.500" r="12" fill="url(#sun)" /><path d="M3 17q3-1 5-3 4-5 9-3 3 1 3 3 4 0 5 4z" fill="#f3dcc4" /><path d="M0 19h28" stroke="#cfb49c" strokeWidth="2" /></svg>
        <span className="w-[48px] tracking-[-0.5px]">37°C</span>
        <span className="w-[60px] tracking-[-0.3px]">Haze</span>
        <svg viewBox="0 0 16 10" className="mr-[12px] h-[10px] w-4" fill="none" stroke="#fff" strokeWidth="1.500"><path d="M.5 9L8 1l7.500 8" /></svg>
        <svg viewBox="0 0 20 20" className="mr-[10px] h-5 w-5" fill="none" stroke="#fff" strokeWidth="1.300"><path d="M1 3l18-2.500v18L1 16.500z" /><path d="M7 8q3-3.500 6 0M13 5v3h-3M13 12q-3 3.500-6 0M7 15v-3h3" /><circle cx="15.500" cy="15.500" r="4.500" fill="#ff9800" stroke="none" /></svg>
        <svg viewBox="0 0 20 16" className="mr-[10px] h-4 w-5" fill="none" stroke="#fff" strokeWidth="1.300"><path d="M6 4h12v10H4V9M18 7h1.500v4H18M1 1v2.500M4 1v2.500M0 3.500h5V6Q4 8 2.500 8 1 8 .5 6V3.500M2.500 8v4" /><path d="M7 6h7v6H7z" fill="#fff" /></svg>
        <svg viewBox="0 0 20 18" className="mr-[9px] h-[18px] w-5" fill="none" stroke="#fff" strokeWidth="1.300"><path d="M5 2.500h14v10H4V7M11 12.500v4M7 16.700h9M.7.7h3.600V5H.7zM2.500 5v4" /></svg>
        <svg viewBox="0 0 22 18" className="mr-[15px] h-[18px] w-[22px]" fill="none" stroke="#fff" strokeWidth="1.300"><path d="M1 6h2.500L8 2v14l-4.500-4H1zM11 6.500q1.800 2.500 0 5" /><path d="M14 4.500q3 4.500 0 9M17 2q5 7 0 14" strokeOpacity=".5" /></svg>
        <div className="flex w-[62px] flex-col items-center text-[15px] leading-[23px] tracking-[-0.5px]">
          <span>6:31 PM</span>
          <span>7/2/2021</span>
        </div>
        <svg viewBox="0 0 20 20" className="mr-[25px] ml-[27px] h-5 w-5" fill="none" stroke="#fff" strokeWidth="1.300"><path d="M.7.7h18.600v15.500H13l-3 3-3-3H.7z" /></svg>
        <span className="mr-[5px] h-[50px] w-px bg-[#6b7377]" />
      </div>
    </div>
  );
}

export default function App() {
  return (
    <div className="h-[1080px] w-[1920px] overflow-hidden bg-[#fafafa] font-['Segoe_UI','Open_Sans','Noto_Sans',sans-serif]">
      <TabStrip />
      <AddressBar />
      <Bookmarks />
      <div className="flex h-[901px] font-['Nunito','Open_Sans','Noto_Sans',sans-serif]">
        <Sidebar />
        <main className="min-w-0 flex-1">
          <MapView />
          <DataTable />
        </main>
      </div>
      <Taskbar />
    </div>
  );
}
